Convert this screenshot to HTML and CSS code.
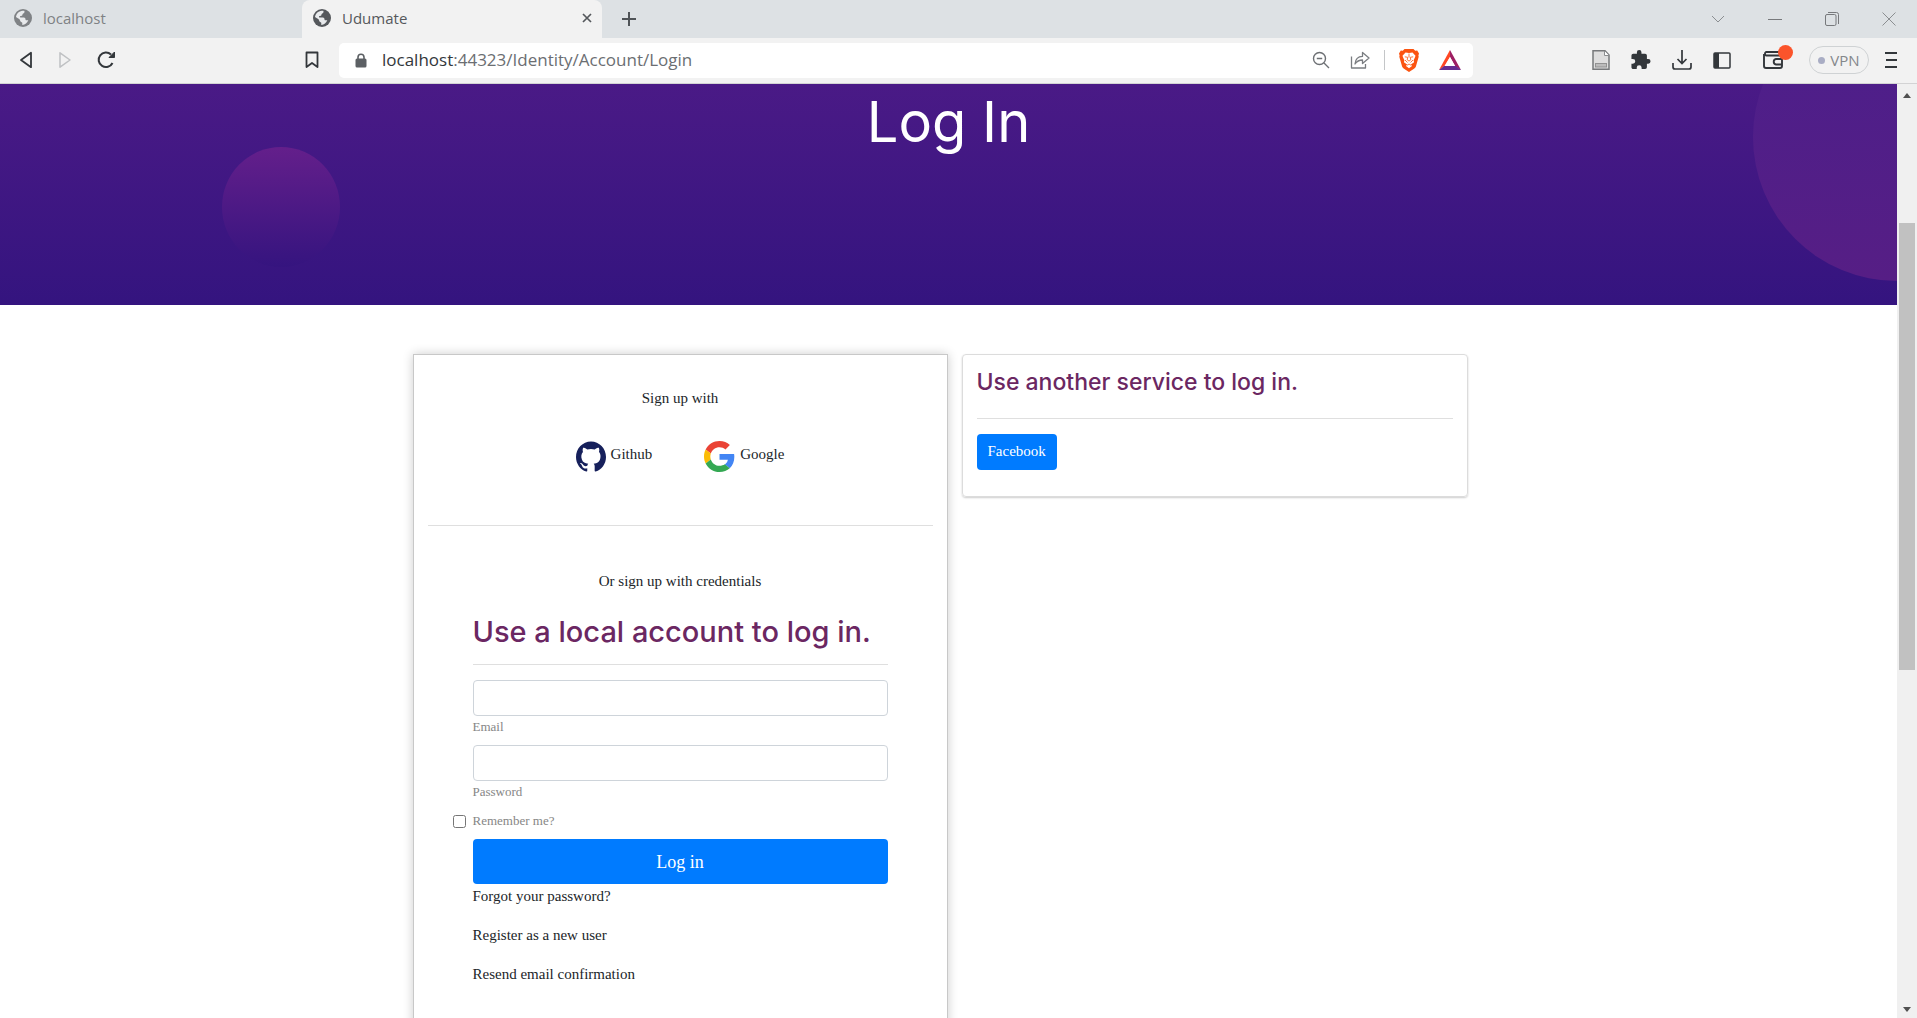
FILE: index.html
```html
<!DOCTYPE html>
<html lang="en">
<head>
<meta charset="utf-8">
<meta name="viewport" content="width=device-width, initial-scale=1">
<title>Udumate</title>
<link rel="stylesheet" href="styles.css">
</head>
<body>
<svg class="sprite" aria-hidden="true">
  <symbol id="globe" viewBox="0 0 18 18">
    <circle cx="9" cy="9" r="9" fill="currentColor"/>
    <path d="M10.2 1.8c.8 1 .2 2.2-.9 2.6-.5.2-.9.5-.8 1.200.100 1-.6 1.400-1.700 1.300-.6 0-.8.4-.8 1 .1.600.500.800 1.200.700h2.600c1.300 0 1.500.8 1.700 1.800.1.700.7.900 1.500.900h1.300c-1 2.600-3.200 4.500-6 4.800-.1-.9.200-1.900-.2-2.500-.6-.9-2-.7-2-2.200C6.100 10.300 4 9.400 2 8.100 2.300 4.700 5 2 8.600 1.700z" fill="#e8eaec"/>
  </symbol>
</svg>

<header class="browser">
  <div class="tabs">
    <div class="tab"><svg class="globe"><use href="#globe"/></svg><span class="tab-title">localhost</span></div>
    <div class="tab tab-active"><svg class="globe"><use href="#globe"/></svg><span class="tab-title">Udumate</span>
      <button class="icon-btn" aria-label="Close tab"><svg width="10" height="10" viewBox="0 0 10 10"><path d="M1 1l8 8M9 1L1 9" stroke="#55585c" stroke-width="1.700"/></svg></button>
    </div>
    <button class="icon-btn new-tab" aria-label="New tab"><svg width="16" height="16" viewBox="0 0 16 16"><path d="M8 1v14M1 8h14" stroke="#4f5357" stroke-width="2"/></svg></button>
    <div class="window-controls">
      <button class="icon-btn" aria-label="Search tabs"><svg width="14" height="8" viewBox="0 0 14 8"><path d="M1 1l6 6 6-6" fill="none" stroke="#8b8e91"/></svg></button>
      <button class="icon-btn" aria-label="Minimize"><svg width="14" height="14" viewBox="0 0 14 14"><path d="M0 7.500h14" stroke="#77797c"/></svg></button>
      <button class="icon-btn" aria-label="Restore"><svg width="14" height="14" viewBox="0 0 14 14"><rect x=".5" y="2.500" width="10.500" height="11" rx="1.500" fill="none" stroke="#77797c"/><path d="M3 .5h8.500a2 2 0 0 1 2 2V12" fill="none" stroke="#77797c"/></svg></button>
      <button class="icon-btn" aria-label="Close window"><svg width="14" height="14" viewBox="0 0 14 14"><path d="M.5.5l13 13M13.500.5l-13 13" stroke="#8b8e91"/></svg></button>
    </div>
  </div>

  <div class="toolbar">
    <div class="nav">
      <button class="icon-btn" aria-label="Back"><svg width="14" height="18" viewBox="0 0 14 18"><path d="M12 1.800v14.400L2 9z" fill="none" stroke="#33373b" stroke-width="1.800" stroke-linejoin="round"/></svg></button>
      <button class="icon-btn" aria-label="Forward"><svg width="14" height="18" viewBox="0 0 14 18"><path d="M2 1.800v14.400L12 9z" fill="none" stroke="#bfc1c3" stroke-width="1.500" stroke-linejoin="round"/></svg></button>
      <button class="icon-btn" aria-label="Reload"><svg width="18" height="18" viewBox="0 0 18 18"><path d="M15.500 12A7.300 7.300 0 1 1 14 3.500" fill="none" stroke="#33373b" stroke-width="2"/><path d="M12 6.500h5.500V1z" fill="#33373b" stroke="#33373b" stroke-linejoin="round"/></svg></button>
    </div>
    <button class="icon-btn bookmark" aria-label="Bookmark"><svg width="14" height="18" viewBox="0 0 14 18"><path d="M1.500 1.500h11v14.500L7 12l-5.500 4z" fill="none" stroke="#33373b" stroke-width="1.800" stroke-linejoin="round"/></svg></button>
    <div class="address">
      <svg width="12" height="15" viewBox="0 0 12 15"><path d="M3 7V4.300a3 3 0 0 1 6 0V7" fill="none" stroke="#5c6064" stroke-width="1.600"/><rect x=".5" y="5.500" width="11" height="9" rx="1.500" fill="#5c6064"/></svg>
      <span class="url"><b>localhost</b>:44323/Identity/Account/Login</span>
      <button class="icon-btn" aria-label="Zoom out"><svg width="18" height="18" viewBox="0 0 18 18" fill="none" stroke="#6d7074" stroke-width="1.400"><circle cx="7.500" cy="7.500" r="6"/><path d="M12 12l5 5M4.800 7.500h5.400"/></svg></button>
      <button class="icon-btn" aria-label="Share"><svg width="20" height="18" viewBox="0 0 20 18" fill="none" stroke="#7a7d81" stroke-width="1.300" stroke-linejoin="round"><path d="M1.500 5.500v11.500h14v-4"/><path d="M5 13c.4-5 3-7.500 7.500-7.600V1.500L19 7l-6.500 5.500V9C9 9 7 10 5 13z"/></svg></button>
      <span class="divider"></span>
      <button class="icon-btn" aria-label="Brave Shields"><svg width="20" height="24" viewBox="0 0 20 24"><path d="M5.500 1h9l1.700 1.800 2-.2L20 5.500l-.6 2 .3 1.200-2.800 9.800c-.3 1-1 1.700-1.900 2.300L10 24l-5-3.200c-.9-.6-1.600-1.300-1.900-2.300L.3 8.700l.3-1.200-.6-2 1.800-2.900 2 .2z" fill="#fb5411"/><path d="M6.500 4.500l3.500.6 3.500-.6 3 3.300-.7 2-1.200 2.400.5 2-3.200 2.300L13 18l-3 2.200L7 18l1.100-1.500-3.200-2.300.5-2-1.200-2.400-.7-2z" fill="#fff"/><path d="M5.800 8.800l2.900.5-.5 2.500 1.800 1.300 1.800-1.300-.5-2.500 2.900-.5M6 12l2.500 2.500M14 12l-2.500 2.500M10 5.500v4M8 17.300l2-1.300 2 1.300" fill="none" stroke="#fb5411" stroke-width=".8"/></svg></button>
      <button class="icon-btn" aria-label="Brave Rewards"><svg width="22" height="20" viewBox="0 0 22 20"><path d="M11 0v7l-5.500 9L0 20z" fill="#ff4724"/><path d="M11 0l11 20-6-3.800L11 7z" fill="#9e1f63"/><path d="M0 20l5-4h12l5 4z" fill="#662d91"/><path d="M11 7l5.200 9H5.800z" fill="#fff"/></svg></button>
    </div>
    <div class="actions">
      <button class="icon-btn" aria-label="Document extension"><svg width="18" height="20" viewBox="0 0 18 20"><path d="M1 .8h12L17 5v14.200H1z" fill="#dedede" stroke="#77797b" stroke-width="1.500"/><path d="M12.500 1v4.500H17" fill="#fff" stroke="#8b8d8f"/><rect x="3.500" y="13.500" width="11" height="3.500" fill="#bcbcbc" stroke="#929292"/></svg></button>
      <button class="icon-btn" aria-label="Extensions"><svg width="20" height="20" viewBox="2 1 21 22"><path d="M20.500 11H19V7a2 2 0 0 0-2-2h-4V3.500a2.500 2.500 0 0 0-5 0V5H4a2 2 0 0 0-2 2v3.800h1.500a2.700 2.700 0 0 1 0 5.400H2V20c0 1.100.9 2 2 2h3.800v-1.500a2.700 2.700 0 0 1 5.400 0V22H17a2 2 0 0 0 2-2v-4h1.500a2.500 2.500 0 0 0 0-5z" fill="#33373b"/></svg></button>
      <button class="icon-btn" aria-label="Downloads"><svg width="20" height="20" viewBox="0 0 20 20"><path d="M10 0v13M5.500 9L10 13.500 14.500 9M1 13v4a2 2 0 0 0 2 2h14a2 2 0 0 0 2-2v-4" fill="none" stroke="#33373b" stroke-width="1.700"/></svg></button>
      <button class="icon-btn" aria-label="Sidebar"><svg width="18" height="17" viewBox="0 0 18 17"><rect x="1" y="1" width="16" height="15" rx="1" fill="none" stroke="#33373b" stroke-width="1.500"/><path d="M1 1h5v15H1z" fill="#33373b"/></svg></button>
      <button class="icon-btn wallet" aria-label="Wallet"><svg width="20" height="18" viewBox="0 0 20 18" fill="none" stroke="#33373b" stroke-width="1.900"><path d="M19 4.500H3a2 2 0 0 1 0-3.500h13M1 3v12a2 2 0 0 0 2 2h14a2 2 0 0 0 2-2V5"/><path d="M19 8h-6a2.800 2.800 0 0 0 0 5.500h6"/></svg><span class="badge"></span></button>
      <button class="vpn"><span class="vpn-dot"></span>VPN</button>
      <button class="icon-btn" aria-label="Menu"><svg width="12" height="18" viewBox="0 0 12 18"><path d="M0 2h12M1 9h11M0 16h12" stroke="#33373b" stroke-width="2"/></svg></button>
    </div>
  </div>
</header>

<div class="viewport">
  <div class="page">
    <section class="hero">
      <span class="bubble bubble-left"></span>
      <span class="bubble bubble-right"></span>
      <h1>Log In</h1>
    </section>

    <main class="content">
      <section class="login-card">
        <p class="lead">Sign up with</p>
        <div class="providers">
          <a href="#github"><svg width="30" height="31" viewBox="0 0 24 24" preserveAspectRatio="none"><path fill="#16205b" d="M12 .297c-6.630 0-12 5.373-12 12 0 5.303 3.438 9.800 8.205 11.385.6.113.820-.258.820-.577 0-.285-.010-1.040-.015-2.040-3.338.724-4.042-1.610-4.042-1.610C4.422 18.070 3.633 17.700 3.633 17.700c-1.087-.744.084-.729.084-.729 1.205.084 1.838 1.236 1.838 1.236 1.070 1.835 2.809 1.305 3.495.998.108-.776.417-1.305.760-1.605C7.145 17.300 5.500 16.500 4.800 14.500 3.800 12 4.200 9.900 5.579 8.450c-.135-.303-.540-1.523.105-3.176 0 0 1.005-.322 3.300 1.230.960-.267 1.980-.399 3-.405 1.020.006 2.040.138 3 .405 2.280-1.552 3.285-1.230 3.285-1.230.645 1.653.240 2.873.120 3.176.765.840 1.230 1.910 1.230 3.220 0 4.610-2.805 5.625-5.475 5.920.420.360.810 1.096.810 2.220 0 1.606-.015 2.896-.015 3.286 0 .315.210.690.825.570C20.565 22.092 24 17.592 24 12.297c0-6.627-5.373-12-12-12"/></svg>Github</a>
          <a href="#google"><svg width="31" height="31" viewBox="0 0 48 48" preserveAspectRatio="none"><path fill="#EA4335" d="M24 9.500c3.540 0 6.710 1.220 9.210 3.600l6.850-6.850C35.900 2.380 30.470 0 24 0 14.620 0 6.510 5.380 2.560 13.220l7.980 6.190C12.430 13.720 17.740 9.500 24 9.500z"/><path fill="#4285F4" d="M46.980 24.550c0-1.570-.150-3.090-.380-4.550H24v9.020h12.940c-.580 2.960-2.260 5.480-4.780 7.180l7.730 6c4.510-4.180 7.090-10.360 7.090-17.650z"/><path fill="#FBBC05" d="M10.530 28.590c-.480-1.450-.760-2.990-.760-4.590s.270-3.140.760-4.590l-7.980-6.190C.920 16.460 0 20.120 0 24c0 3.880.920 7.540 2.560 10.780l7.970-6.190z"/><path fill="#34A853" d="M24 48c6.480 0 11.930-2.130 15.890-5.810l-7.730-6c-2.150 1.450-4.920 2.300-8.160 2.300-6.260 0-11.570-4.220-13.470-9.910l-7.980 6.190C6.510 42.620 14.620 48 24 48z"/></svg>Google</a>
        </div>
        <hr>
        <p class="lead">Or sign up with credentials</p>
        <form class="login-form">
          <h2>Use a local account to log in.</h2>
          <hr>
          <input class="field" type="email" id="email">
          <label class="field-label" for="email">Email</label>
          <input class="field" type="password" id="password">
          <label class="field-label" for="password">Password</label>
          <div class="remember"><input type="checkbox" id="remember"><label for="remember">Remember me?</label></div>
          <button class="btn btn-large" type="submit">Log in</button>
          <a href="#forgot">Forgot your password?</a>
          <a href="#register">Register as a new user</a>
          <a href="#resend">Resend email confirmation</a>
        </form>
      </section>

      <section class="service-card">
        <h3>Use another service to log in.</h3>
        <hr>
        <button class="btn">Facebook</button>
      </section>
    </main>
  </div>
  <div class="scrollbar" aria-hidden="true">
    <span class="arrow arrow-up"></span>
    <span class="track"><span class="thumb"></span></span>
    <span class="arrow arrow-down"></span>
  </div>
</div>
</body>
</html>
```
FILE: styles.css
```css
* { box-sizing: border-box; }

body {
  margin: 0;
  height: 100vh;
  display: flex;
  flex-direction: column;
  overflow: hidden;
  background: #fff;
  font: 15px/24px "Liberation Serif", serif;
  color: #212529;
}

button { font: inherit; cursor: pointer; }
a { color: inherit; text-decoration: none; }
svg { display: block; flex: none; }
.sprite { position: absolute; width: 0; height: 0; }

/* Browser window */
.browser {
  flex: none;
  font-family: "Open Sans", sans-serif;
  border-bottom: 1px solid #d3d3d4;
  background: #f2f2f2;
}
.icon-btn {
  display: flex;
  align-items: center;
  justify-content: center;
  padding: 0;
  border: 0;
  background: none;
}
.tabs {
  display: flex;
  align-items: center;
  height: 38px;
  background: #dde1e4;
}
.tab {
  display: flex;
  align-items: center;
  gap: 11px;
  width: 302px;
  height: 38px;
  padding: 0 10px 2px 14px;
  color: #7f8285;
  font-size: 15px;
}
.tab-active {
  width: 300px;
  padding-left: 11px;
  background: #f2f2f2;
  color: #55585c;
  font-weight: 500;
  border-radius: 8px 8px 0 0;
}
.tab-title { flex: 1; }
.globe { width: 18px; height: 18px; }
.new-tab { margin-left: 19px; }
.window-controls {
  display: flex;
  gap: 43px;
  margin-left: auto;
  padding-right: 21px;
}
.toolbar {
  display: flex;
  align-items: center;
  height: 45px;
  padding-bottom: 1px;
}
.nav { display: flex; gap: 25px; padding-left: 19px; }
.bookmark { margin-left: 190px; }
.address {
  flex: 1;
  display: flex;
  align-items: center;
  gap: 20px;
  height: 35px;
  margin-left: 20px;
  padding: 0 12px 0 16px;
  border-radius: 5px;
  background: #fff;
}
.url { flex: 1; margin-left: -5px; font-size: 17px; color: #6b6e72; }
.url b { font-weight: 400; color: #33373b; }
.divider { width: 1px; height: 20px; margin: 0 -6px; background: #c4c6c8; }
.actions {
  display: flex;
  align-items: center;
  gap: 21px;
  margin-left: 119px;
  padding-right: 20px;
}
.wallet { position: relative; margin: 0 5px 0 11px; }
.badge {
  position: absolute;
  left: 15px;
  top: -6px;
  width: 15px;
  height: 15px;
  border-radius: 50%;
  background: #fb542b;
}
.vpn {
  display: flex;
  align-items: center;
  justify-content: center;
  gap: 5px;
  width: 60px;
  height: 28px;
  padding: 0;
  border: 1px solid #cfd2d4;
  border-radius: 14px;
  background: none;
  font-size: 15px;
  color: #84878b;
}
.vpn-dot { width: 7px; height: 7px; border-radius: 50%; background: #a9adc4; }
.vpn + .icon-btn { margin-left: -5px; }

/* Page viewport */
.viewport { flex: 1; display: flex; min-height: 0; }
.page { flex: 1; overflow: hidden; }

.hero {
  position: relative;
  height: 221px;
  overflow: hidden;
  background: linear-gradient(#4a1a86, #34147f);
  text-align: center;
}
.hero h1 {
  position: relative;
  margin: 0;
  color: #fff;
  font: 400 56px/76px Inter, sans-serif;
}
.bubble { position: absolute; border-radius: 50%; }
.bubble-left {
  left: 222px;
  top: 63px;
  width: 118px;
  height: 120px;
  background: linear-gradient(#641f8b, #35147f);
}
.bubble-right {
  right: -144px;
  top: -91px;
  width: 288px;
  height: 288px;
  background: linear-gradient(#4b1f8b, #561e85);
}

.content {
  display: grid;
  grid-template-columns: 535fr 506fr;
  gap: 14px;
  align-items: start;
  max-width: 1072px;
  margin: 49px auto 0;
  padding-right: 17px;
}
hr { margin: 0; border: 0; border-top: 1px solid #dfdfdf; }
.login-card {
  padding: 31px 14px 80px;
  border: 1px solid #c8c8c8;
  box-shadow: 0 0 10px rgba(0, 0, 0, .2);
}
.lead { margin: 0; text-align: center; }
.providers {
  display: flex;
  justify-content: center;
  gap: 52px;
  margin: 31px 0 53px;
}
.providers a { display: flex; gap: 5px; line-height: 26px; }
.login-card > hr + .lead { margin-top: 43px; }
.login-form {
  display: flex;
  flex-direction: column;
  padding: 21px 45px 0;
}
h2, h3 { margin: 0; color: #6b2762; font-family: Inter, sans-serif; font-weight: 500; }
h2 { font-size: 29px; line-height: 36px; }
h3 { font-size: 23px; line-height: 28px; }
.login-form hr { margin: 14px 0 15px; }
.field {
  width: 100%;
  height: 36px;
  padding: 6px 12px;
  border: 1px solid #ced4da;
  border-radius: 4px;
  background: #fff;
  font: inherit;
}
.field-label { margin-bottom: 9px; line-height: 20px; padding-top: 1px; }
.field-label + .field { margin-top: -1px; }
.field-label, .remember { font-size: 13px; color: #868686; }
.remember {
  display: flex;
  align-items: center;
  gap: 7px;
  margin: 0 0 8px -20px;
  line-height: 20px;
}
.remember input { width: 13px; height: 13px; margin: 0; }
.btn {
  height: 36px;
  padding: 0 11px 2px;
  border: 0;
  border-radius: 4px;
  background: #007bff;
  color: #fff;
}
.btn-large { height: 45px; padding-bottom: 0; font-size: 18px; }
.login-form a { margin-bottom: 14px; line-height: 25px; }
.service-card {
  padding: 13px 14px 26px;
  border: 1px solid #dcdcdc;
  border-radius: 4px;
  box-shadow: 0 1px 2px rgba(0, 0, 0, .2);
}
.service-card hr { margin: 22px 0 15px; }

/* Scrollbar */
.scrollbar {
  display: flex;
  flex-direction: column;
  align-items: center;
  width: 20px;
  padding: 9px 0 6px;
  background: #f0f0f0;
}
.arrow { border: 4px solid transparent; }
.arrow-up { border-top: 0; border-bottom: 5px solid #505050; }
.arrow-down { border-bottom: 0; border-top: 5px solid #505050; }
.track { flex: 1; width: 16px; padding: 125px 0 0; }
.thumb { display: block; height: 57%; background: #c1c1c1; }
```
